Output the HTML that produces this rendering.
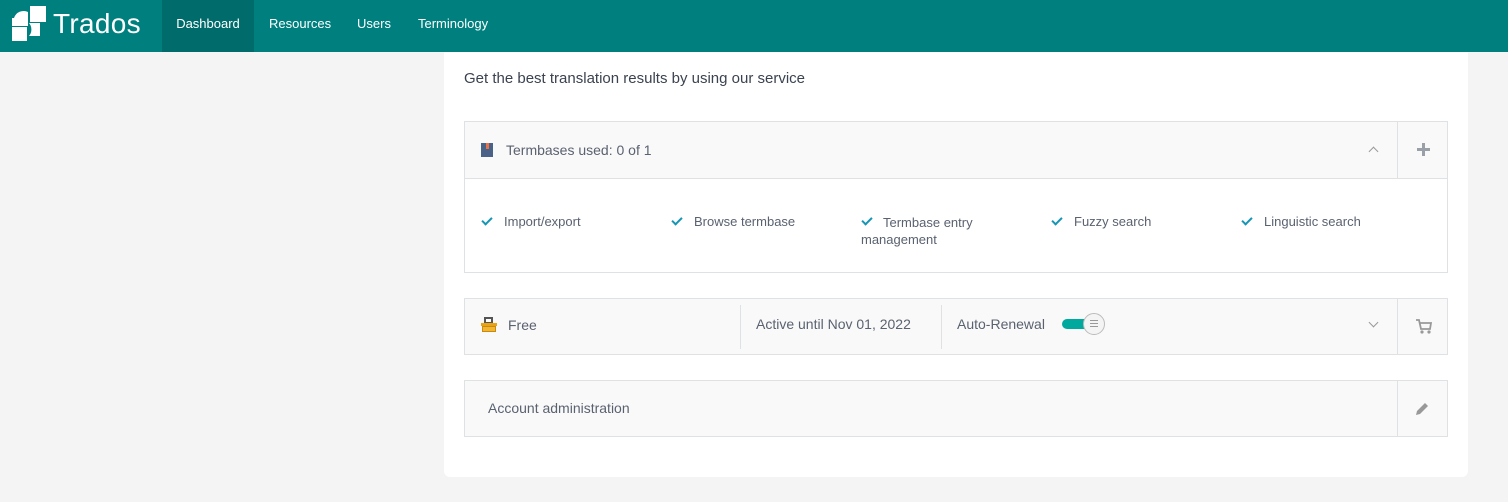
<!DOCTYPE html>
<html><head><style>
*{box-sizing:border-box;margin:0;padding:0}
body{width:1508px;height:502px;background:#f4f4f4;font-family:"Liberation Sans",sans-serif;color:#5a6270;position:relative;overflow:hidden}
.hdr{position:absolute;left:0;top:0;width:1508px;height:52px;background:#007f7f}
.logo{position:absolute;left:0;top:0}
.brand{position:absolute;left:53px;top:8px;color:#fff;font-size:28px;letter-spacing:0.3px}
.nav{position:absolute;top:0;height:52px;line-height:47px;color:#fff;font-size:13px}
.card{position:absolute;left:444px;top:52px;width:1024px;height:425px;background:#fff;border-radius:0 0 6px 6px}
.title{position:absolute;left:464px;top:70px;font-size:15px;color:#3b4350}
.panel{position:absolute;left:464px;width:984px;border:1px solid #dfe2e5;background:#f9f9f9}
.ph{position:absolute;left:0;top:0;height:55px;width:100%}
.vd{position:absolute;top:0;width:1px;height:100%;background:#dfe2e5}
.t{position:absolute;font-size:14px;color:#5a6270}
.chk{position:absolute;width:10px;height:6px;border-left:2px solid #1596b4;border-bottom:2px solid #1596b4;transform:rotate(-45deg)}
</style></head><body>
<div class="hdr">
<svg class="logo" width="52" height="52" viewBox="0 0 52 52"><g fill="#fff">
<rect x="30" y="6" width="16" height="16"/>
<path d="M12 26V18h2a10 10 0 0 1 14-6v14z"/>
<rect x="12" y="27" width="15" height="14"/>
<path d="M29 23h11v13h-11a10 10 0 0 0 -0-13z"/>
</g></svg>
<div class="brand">Trados</div>
<div class="nav" style="left:162px;width:92px;background:#006b6b;text-align:center">Dashboard</div>
<div class="nav" style="left:269px">Resources</div>
<div class="nav" style="left:357px">Users</div>
<div class="nav" style="left:418px">Terminology</div>
</div>
<div class="card"></div>
<div class="title">Get the best translation results by using our service</div>

<div class="panel" style="top:121px;height:152px;background:#fff">
<div class="ph" style="background:#f9f9f9;border-bottom:1px solid #dfe2e5;height:57px">
<div style="position:absolute;left:16px;top:21px;width:12px;height:14px;background:#4a6288"></div><div style="position:absolute;left:21px;top:21px;width:3px;height:6px;background:#e8734a"></div>
<div class="t" style="left:41px;top:20px">Termbases used: 0 of 1</div>
<div style="position:absolute;left:905px;top:26px;width:7px;height:7px;border-left:1px solid #999;border-top:1px solid #999;transform:rotate(45deg)"></div>
<div class="vd" style="left:932px"></div>
<div style="position:absolute;left:952px;top:26px;width:13px;height:3px;background:#9aa0a8"></div><div style="position:absolute;left:957px;top:21px;width:3px;height:13px;background:#9aa0a8"></div>
</div>
<div class="chk" style="left:17px;top:95px"></div><div class="t" style="left:39px;top:92px;font-size:13px">Import/export</div>
<div class="chk" style="left:207px;top:95px"></div><div class="t" style="left:229px;top:92px;font-size:13px">Browse termbase</div>
<div class="chk" style="left:397px;top:95px"></div><div class="t" style="left:396px;top:92px;font-size:13px;line-height:17px;text-indent:22px;width:140px">Termbase entry management</div>
<div class="chk" style="left:587px;top:95px"></div><div class="t" style="left:609px;top:92px;font-size:13px">Fuzzy search</div>
<div class="chk" style="left:777px;top:95px"></div><div class="t" style="left:799px;top:92px;font-size:13px">Linguistic search</div>
</div>

<div class="panel" style="top:298px;height:57px">
<div style="position:absolute;left:16px;top:18px;width:16px;height:15px"><div style="position:absolute;left:3px;top:0;width:9px;height:7px;border:2px solid #555;background:#fff"></div><div style="position:absolute;left:0;top:6px;width:16px;height:3px;background:#e8a317"></div><div style="position:absolute;left:1px;top:9px;width:14px;height:6px;background:#f2b630;border:1px solid #c98a10"></div></div>
<div class="t" style="left:43px;top:18px">Free</div>
<div class="vd" style="left:275px;top:6px;height:44px"></div>
<div class="t" style="left:291px;top:17px">Active until Nov 01, 2022</div>
<div class="vd" style="left:476px;top:6px;height:44px"></div>
<div class="t" style="left:492px;top:17px">Auto-Renewal</div>
<div style="position:absolute;left:597px;top:20px;width:34px;height:10px;border-radius:5px;background:#00a99d"></div>
<div style="position:absolute;left:618px;top:14px;width:22px;height:22px;border-radius:50%;background:#f4f4f4;border:1px solid #bbb"></div>
<div style="position:absolute;left:625px;top:21px;width:8px;height:7px;border-top:1px solid #999;border-bottom:1px solid #999"></div><div style="position:absolute;left:625px;top:24px;width:8px;height:1px;background:#999"></div>
<div style="position:absolute;left:905px;top:20px;width:7px;height:7px;border-right:1px solid #999;border-bottom:1px solid #999;transform:rotate(45deg)"></div>
<div class="vd" style="left:932px"></div>
<svg style="position:absolute;left:950px;top:19px" width="18" height="17" viewBox="0 0 18 17"><path d="M1 2h3l2 9h9l1-6H5" stroke="#999" stroke-width="1.8" fill="none"/><circle cx="7" cy="14" r="1.6" fill="#999"/><circle cx="14" cy="14" r="1.6" fill="#999"/></svg>
</div>

<div class="panel" style="top:380px;height:57px">
<div class="t" style="left:23px;top:19px">Account administration</div>
<div class="vd" style="left:932px"></div>
<svg style="position:absolute;left:949px;top:20px" width="16" height="16" viewBox="0 0 16 16"><path d="M2 14l1-4 8-8 3 3-8 8z" fill="#999"/></svg>
</div>
</body></html>
